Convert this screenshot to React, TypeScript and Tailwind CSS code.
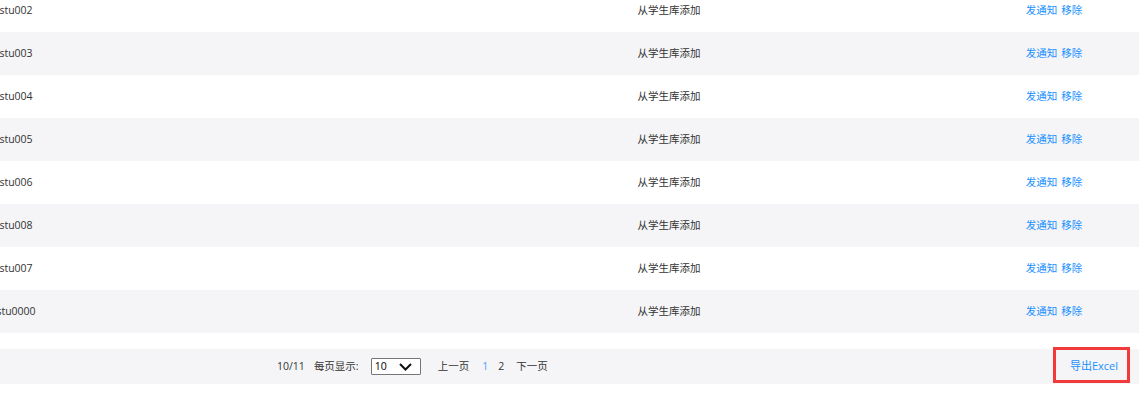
import React from "react";

const ROWS = ["stu002", "stu003", "stu004", "stu005", "stu006", "stu008", "stu007", "stu0000"];

export default function App() {
  return (
    <div
      className="w-[1139px] h-[420px] overflow-hidden bg-white text-[10.5px] text-[#333]"
      style={{ fontFamily: '"Open Sans", "Noto Sans CJK SC", sans-serif' }}
    >
      {/* Table body */}
      <div className="-mt-[11px]">
        {ROWS.map((id, i) => (
          <div
            key={id}
            className={`grid grid-cols-[32px_537px_200px_235px_100px] h-[43px] items-center ${
              i % 2 === 1 ? "bg-[#f5f5f7]" : "bg-white"
            }`}
          >
            <div className="flex justify-center whitespace-nowrap">{id}</div>
            <div />
            <div className="flex justify-center whitespace-nowrap">从学生库添加</div>
            <div />
            <div className="flex justify-center gap-[4px] whitespace-nowrap text-[#1890ff]">
              <span>发通知</span>
              <span>移除</span>
            </div>
          </div>
        ))}
      </div>

      {/* Footer */}
      <div className="relative mt-[16px] h-[35px] bg-[#f5f5f7] flex items-center">
        <div className="flex items-center pl-[277px] whitespace-nowrap">
          <span>10/11</span>
          <span className="ml-[9px]">每页显示:</span>
          <div className="ml-[12px] w-[50px] h-[17px] border border-[#767676] bg-white rounded-[1px] flex items-center justify-between pl-[3px] pr-[8px] text-black">
            <span>10</span>
            <svg width="13" height="8" viewBox="0 0 13 8" fill="none">
              <path d="M1 1l5.5 5.5L12 1" stroke="#111" strokeWidth="2" />
            </svg>
          </div>
          <span className="ml-[17px]">上一页</span>
          <span className="ml-[13px] text-[#4a9eff]">1</span>
          <span className="ml-[10px]">2</span>
          <span className="ml-[12px]">下一页</span>
        </div>
        <div className="ml-auto mr-[21px] text-[11px] text-[#1890ff] whitespace-nowrap">导出Excel</div>
        <div className="absolute left-[1053px] top-[-2px] w-[77px] h-[36px] border-[3px] border-[#f23a3a]" />
      </div>
    </div>
  );
}
